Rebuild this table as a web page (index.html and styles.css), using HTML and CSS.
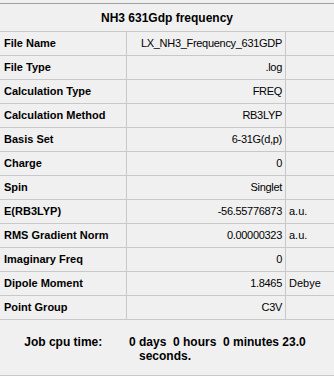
FILE: index.html
```html
<!DOCTYPE html>
<html lang="en">
<head>
    <meta charset="UTF-8">
    <meta name="viewport" content="width=device-width, initial-scale=1.0">
    <title>NH3 631Gdp frequency</title>
    <link rel="stylesheet" href="styles.css">
</head>
<body>
    <div class="panel">
        <div class="title">NH3 631Gdp frequency</div>
        <div class="row"><span class="label">File Name</span><span class="value">LX_NH3_Frequency_631GDP</span><span class="unit"></span></div>
        <div class="row"><span class="label">File Type</span><span class="value">.log</span><span class="unit"></span></div>
        <div class="row"><span class="label">Calculation Type</span><span class="value">FREQ</span><span class="unit"></span></div>
        <div class="row"><span class="label">Calculation Method</span><span class="value">RB3LYP</span><span class="unit"></span></div>
        <div class="row"><span class="label">Basis Set</span><span class="value">6-31G(d,p)</span><span class="unit"></span></div>
        <div class="row"><span class="label">Charge</span><span class="value">0</span><span class="unit"></span></div>
        <div class="row"><span class="label">Spin</span><span class="value">Singlet</span><span class="unit"></span></div>
        <div class="row"><span class="label">E(RB3LYP)</span><span class="value">-56.55776873</span><span class="unit">a.u.</span></div>
        <div class="row"><span class="label">RMS Gradient Norm</span><span class="value">0.00000323</span><span class="unit">a.u.</span></div>
        <div class="row"><span class="label">Imaginary Freq</span><span class="value">0</span><span class="unit"></span></div>
        <div class="row"><span class="label">Dipole Moment</span><span class="value">1.8465</span><span class="unit">Debye</span></div>
        <div class="row"><span class="label">Point Group</span><span class="value">C3V</span><span class="unit"></span></div>
        <div class="cpu-time">Job cpu time:&nbsp;&nbsp;&nbsp;&nbsp;&nbsp;&nbsp;&nbsp; 0 days&nbsp;&nbsp;0 hours&nbsp;&nbsp;0 minutes 23.0 seconds.</div>
    </div>
</body>
</html>
```
FILE: styles.css
```css
body {
    margin: 0;
    background-color: #f0f0f0;
    font-family: "Liberation Sans", Arial, sans-serif;
    color: #000;
}
.panel {
    width: 334px;
    padding-top: 3px;
}
.title {
    height: 29px;
    box-sizing: border-box;
    border-top: 1px solid #a0a0a0;
    border-bottom: 1px solid #c8c8c8;
    font-size: 12px;
    font-weight: bold;
    line-height: 28px;
    text-align: center;
}
.row {
    display: flex;
    height: 24px;
    box-sizing: border-box;
    border-bottom: 1px solid #c8c8c8;
    font-size: 11px;
    line-height: 23px;
    white-space: nowrap;
}
.label {
    width: 127px;
    box-sizing: border-box;
    padding-left: 4px;
    border-right: 1px solid #c8c8c8;
    font-weight: bold;
}
.value {
    width: 159px;
    box-sizing: border-box;
    padding-right: 3px;
    border-right: 1px solid #c8c8c8;
    text-align: right;
    letter-spacing: -0.3px;
}
.unit {
    flex: 1;
    padding-left: 3px;
}
.cpu-time {
    height: 56px;
    box-sizing: border-box;
    padding: 15px 22px 0 18px;
    border-bottom: 1px solid #c8c8c8;
    font-size: 12px;
    font-weight: bold;
    line-height: 14px;
    text-align: center;
}
```
